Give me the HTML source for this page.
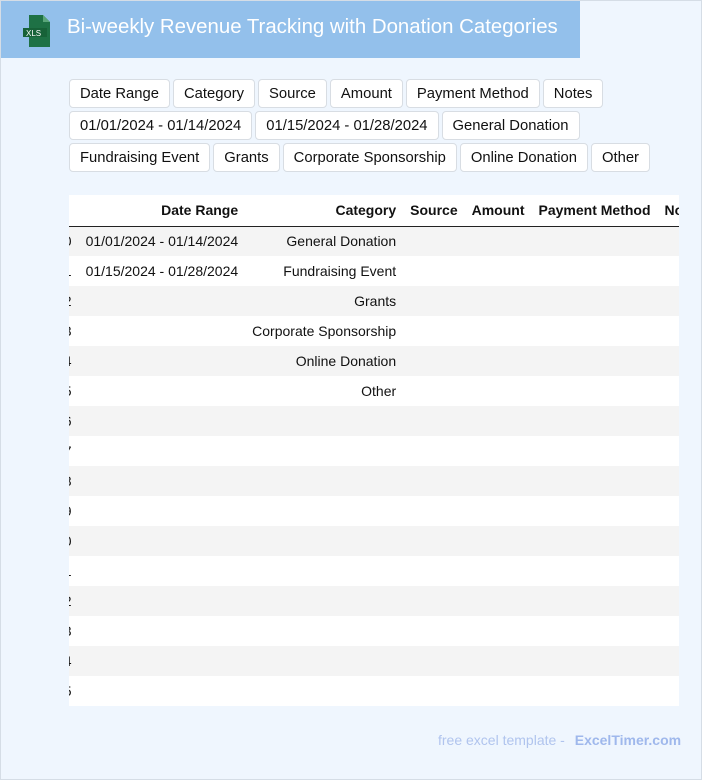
<!DOCTYPE html>
<html><head><meta charset="utf-8"><style>
*{box-sizing:border-box;margin:0;padding:0}
body{width:702px;height:780px;background:#eff6fe;font-family:"Liberation Sans",sans-serif;position:relative;overflow:hidden;border:1px solid #d5dde6}
.hdr{position:absolute;left:0;top:0;width:579px;height:57px;background:#93c0eb}
.hdr h1{position:absolute;left:66px;top:15px;font-size:20.4px;font-weight:normal;color:#fff;white-space:nowrap}
.btns{position:absolute;left:68px;top:78px;width:600px}
.row{display:flex;gap:3px;margin-bottom:3px}
.b{height:29px;border:1px solid #d8dde3;border-radius:4px;background:#fff;font-size:14.8px;line-height:28px;padding:0 10px;color:#111;white-space:nowrap}
.tw{position:absolute;left:68px;top:194px;width:610px;height:511px;overflow:hidden;background:#fff}
table{border-collapse:collapse;position:absolute;left:-20px;top:0;font-size:14px}
th{font-weight:bold;height:31px;border-bottom:1px solid #222;text-align:right;padding:0 7px;white-space:nowrap;color:#111}
td{height:30px;text-align:right;padding:0 7px;white-space:nowrap;color:#111}
tr.g td{background:#f4f4f4}
.ft{position:absolute;left:437px;top:731px;font-size:14px;color:#b0c4ee}
.ft b{color:#9fb8ec;margin-left:6px}
</style></head><body>
<div class="hdr">
<svg style="position:absolute;left:22px;top:14px" width="28" height="32" viewBox="0 0 28 32"><path d="M6 0h14l7 7v25H6z" fill="#1e7145"/><path d="M20 0v7h7z" fill="#5aa67a"/><rect x="0" y="13" width="24" height="9" fill="#176238"/><text x="3" y="21" font-size="8" fill="#fff" font-family="Liberation Sans">XLS</text></svg>
<h1>Bi-weekly Revenue Tracking with Donation Categories</h1></div>
<div class="btns">
<div class="row"><span class="b">Date Range</span><span class="b">Category</span><span class="b">Source</span><span class="b">Amount</span><span class="b">Payment Method</span><span class="b">Notes</span></div>
<div class="row"><span class="b">01/01/2024 - 01/14/2024</span><span class="b">01/15/2024 - 01/28/2024</span><span class="b">General Donation</span></div>
<div class="row"><span class="b">Fundraising Event</span><span class="b">Grants</span><span class="b">Corporate Sponsorship</span><span class="b">Online Donation</span><span class="b">Other</span></div>
</div>
<div class="tw"><table>
<tr><th style="width:22px"></th><th style="width:170px">Date Range</th><th style="width:158px">Category</th><th>Source</th><th>Amount</th><th>Payment Method</th><th style="text-align:left">Notes</th></tr>
<tr class="g"><td>0</td><td>01/01/2024 - 01/14/2024</td><td>General Donation</td><td></td><td></td><td></td><td></td></tr>
<tr><td>1</td><td>01/15/2024 - 01/28/2024</td><td>Fundraising Event</td><td></td><td></td><td></td><td></td></tr>
<tr class="g"><td>2</td><td></td><td>Grants</td><td></td><td></td><td></td><td></td></tr>
<tr><td>3</td><td></td><td>Corporate Sponsorship</td><td></td><td></td><td></td><td></td></tr>
<tr class="g"><td>4</td><td></td><td>Online Donation</td><td></td><td></td><td></td><td></td></tr>
<tr><td>5</td><td></td><td>Other</td><td></td><td></td><td></td><td></td></tr>
<tr class="g"><td>6</td><td></td><td></td><td></td><td></td><td></td><td></td></tr>
<tr><td>7</td><td></td><td></td><td></td><td></td><td></td><td></td></tr>
<tr class="g"><td>8</td><td></td><td></td><td></td><td></td><td></td><td></td></tr>
<tr><td>9</td><td></td><td></td><td></td><td></td><td></td><td></td></tr>
<tr class="g"><td>10</td><td></td><td></td><td></td><td></td><td></td><td></td></tr>
<tr><td>11</td><td></td><td></td><td></td><td></td><td></td><td></td></tr>
<tr class="g"><td>12</td><td></td><td></td><td></td><td></td><td></td><td></td></tr>
<tr><td>13</td><td></td><td></td><td></td><td></td><td></td><td></td></tr>
<tr class="g"><td>14</td><td></td><td></td><td></td><td></td><td></td><td></td></tr>
<tr><td>15</td><td></td><td></td><td></td><td></td><td></td><td></td></tr>
</table></div>
<div class="ft">free excel template - <b>ExcelTimer.com</b></div>
</body></html>
